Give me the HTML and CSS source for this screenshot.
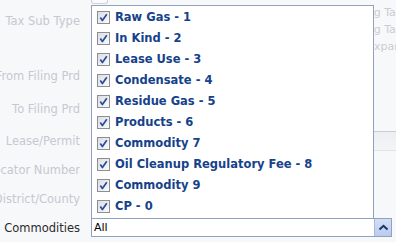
FILE: index.html
```html
<!DOCTYPE html>
<html>
<head>
<meta charset="utf-8">
<link rel="stylesheet" href="styles.css">
</head>
<body>
<div class="page">
  <div class="top">
    <div class="labels">
      <div class="label l1"><span>Tax Sub Type</span></div>
      <div class="label l2"><span>From Filing Prd</span></div>
      <div class="label l3"><span>To Filing Prd</span></div>
      <div class="label l4"><span>Lease/Permit</span></div>
      <div class="label l5"><span>Allocator Number</span></div>
      <div class="label l6"><span>District/County</span></div>
    </div>
    <div class="middle">
      <div class="ghost-box"></div>
    </div>
    <div class="side">
      <div class="side-line"><span class="cut-a">Filing Tax</span></div>
      <div class="side-line"><span class="cut-a">Filing Tax</span></div>
      <div class="side-line"><span class="cut-b">Expand</span></div>
      <div class="band"></div>
    </div>
  </div>
  <div class="bottom">
    <div class="label active"><span>Commodities</span></div>
    <div class="combo">
      <span class="combo-value">All</span>
      <span class="combo-btn">
        <svg width="11" height="7" viewBox="0 0 11 7"><path d="M1.5 5.5 L5.5 1.8 L9.5 5.5" fill="none" stroke="#1b3466" stroke-width="2"/></svg>
      </span>
    </div>
  </div>

  <div class="dropdown">
    <ul class="items">
      <li class="item"><svg class="cb" width="13" height="13" viewBox="0 0 13 13"><use href="#cbx"/></svg><span>Raw Gas - 1</span></li>
      <li class="item"><svg class="cb" width="13" height="13" viewBox="0 0 13 13"><use href="#cbx"/></svg><span>In Kind - 2</span></li>
      <li class="item"><svg class="cb" width="13" height="13" viewBox="0 0 13 13"><use href="#cbx"/></svg><span>Lease Use - 3</span></li>
      <li class="item"><svg class="cb" width="13" height="13" viewBox="0 0 13 13"><use href="#cbx"/></svg><span>Condensate - 4</span></li>
      <li class="item"><svg class="cb" width="13" height="13" viewBox="0 0 13 13"><use href="#cbx"/></svg><span>Residue Gas - 5</span></li>
      <li class="item"><svg class="cb" width="13" height="13" viewBox="0 0 13 13"><use href="#cbx"/></svg><span>Products - 6</span></li>
      <li class="item"><svg class="cb" width="13" height="13" viewBox="0 0 13 13"><use href="#cbx"/></svg><span>Commodity 7</span></li>
      <li class="item"><svg class="cb" width="13" height="13" viewBox="0 0 13 13"><use href="#cbx"/></svg><span>Oil Cleanup Regulatory Fee - 8</span></li>
      <li class="item"><svg class="cb" width="13" height="13" viewBox="0 0 13 13"><use href="#cbx"/></svg><span>Commodity 9</span></li>
      <li class="item"><svg class="cb" width="13" height="13" viewBox="0 0 13 13"><use href="#cbx"/></svg><span>CP - 0</span></li>
    </ul>
  </div>

  <svg class="defs" width="0" height="0">
    <defs>
      <linearGradient id="cbg" x1="0" y1="0" x2="1" y2="1">
        <stop offset="0" stop-color="#dcdde0"/>
        <stop offset="1" stop-color="#fbfbfc"/>
      </linearGradient>
      <g id="cbx">
        <rect x="0.5" y="0.5" width="12" height="12" fill="url(#cbg)" stroke="#8c8e92"/>
        <path d="M3.3 6.6 L5.4 9.6 L9.8 3.2" fill="none" stroke="#2a4c9e" stroke-width="1.7" stroke-linejoin="round"/>
      </g>
    </defs>
  </svg>
</div>
</body>
</html>
```
FILE: styles.css
```css
* { box-sizing: border-box; }
html, body { margin: 0; padding: 0; }
body {
  background: #f7f8fa;
  font-family: "DejaVu Sans", Verdana, sans-serif;
  font-size: 11.5px;
}
.page {
  position: relative;
  width: 396px;
  height: 242px;
  overflow: hidden;
  background: #f7f8fa;
  display: flex;
  flex-direction: column;
}
.top {
  display: flex;
  height: 218px;
}
.labels {
  width: 80px;
  display: flex;
  flex-direction: column;
}
.label {
  width: 80px;
  height: 20px;
  display: flex;
  justify-content: flex-end;
  align-items: center;
  white-space: nowrap;
  color: #c5c9d0;
  flex-shrink: 0;
}
.l1 { margin-top: 11px; }
.l2 { margin-top: 35px; }
.l3 { margin-top: 13px; }
.l4 { margin-top: 12px; }
.l5 { margin-top: 9px; }
.l6 { margin-top: 9px; }
.label.active { color: #2b2b2b; }

.middle {
  width: 294px;
}
.ghost-box {
  margin-left: 11px;
  width: 17px;
  height: 4px;
  border: 1px solid #cfd3d9;
  border-top: none;
  border-radius: 0 0 3px 3px;
  background: #fbfbfc;
}
.side {
  width: 22px;
  padding-top: 4px;
  overflow: hidden;
  color: #c9cdd4;
  font-size: 11px;
}
.side-line {
  height: 17px;
  line-height: 17px;
  white-space: nowrap;
}
.cut-a { margin-left: -22px; }
.cut-b { margin-left: -7px; }
.band {
  margin-top: 76px;
  height: 20px;
  border-top: 1px solid #c8cdd5;
  border-bottom: 1px solid #e0e3e8;
  background: linear-gradient(#eceef1, #f4f5f7);
}

.bottom {
  display: flex;
  align-items: center;
  height: 19px;
}
.combo {
  margin-left: 11px;
  width: 301px;
  height: 19px;
  border: 1px solid #8fa3bf;
  background: #fff;
  display: flex;
  align-items: center;
  justify-content: space-between;
}
.combo-value {
  padding-left: 2px;
  color: #000;
  font-size: 11px;
}
.combo-btn {
  width: 17px;
  height: 17px;
  background: linear-gradient(#d3def5, #b9cbef);
  border-left: 1px solid #a9bbdc;
  display: flex;
  align-items: center;
  justify-content: center;
}
.combo-btn svg { display: block; }

.dropdown {
  position: absolute;
  left: 91px;
  top: 5px;
  width: 283px;
  height: 213px;
  background: #fff;
  border: 1px solid #8fa3bf;
  border-bottom: none;
}
.items {
  list-style: none;
  margin: 0;
  padding: 5px 0 0 5px;
}
.item {
  height: 21px;
  display: flex;
  align-items: flex-start;
  gap: 5px;
  color: #15428b;
  font-weight: bold;
  font-size: 11.5px;
  line-height: 13px;
  white-space: nowrap;
}
.item .cb { display: block; flex-shrink: 0; }
.defs { position: absolute; }
```
